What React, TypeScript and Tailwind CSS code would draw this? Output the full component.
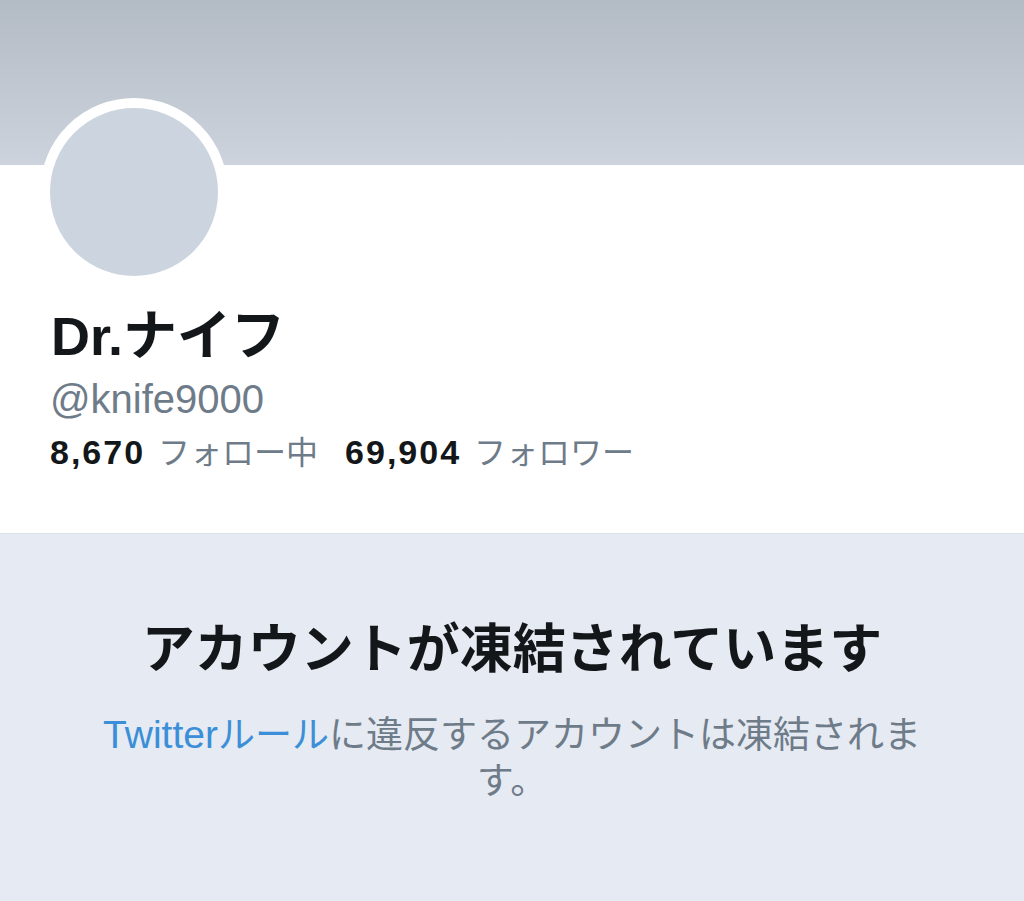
/**
 * Perfil de cuenta suspendida
 */

const sans = 'font-["Liberation_Sans","Noto_Sans_CJK_JP",sans-serif]';

export default function App() {
    return (
        <div className={`w-[1024px] h-[901px] overflow-hidden bg-[#e6eaf2] ${sans}`}>
            {/* banner */}
            <div className="h-[165px] bg-gradient-to-b from-[#b3bbc5] to-[#ccd3dc]" />

            {/* cabecera del perfil */}
            <div className="flex flex-col items-start bg-white pl-[50px] pb-[60px]">
                <div className="-mt-[67px] -ml-[10px] w-[188px] h-[188px] rounded-full border-[10px] border-white bg-[#ccd5df]" />
                <h1 className="mt-[22px] pl-[1px] text-[54px] leading-[57px] font-bold text-[#14171a]">Dr.ナイフ</h1>
                <div className="mt-[12px] text-[40px] leading-[44px] text-[#6e7b89]">@knife9000</div>
                <div className="mt-[11px] flex items-baseline text-[34px] leading-[40px]">
                    <span className="font-bold tracking-[2px] text-[#14171a]">8,670</span>
                    <span className="ml-[13px] text-[32px] text-[#6e7b89]">フォロー中</span>
                    <span className="ml-[27px] font-bold tracking-[2px] text-[#14171a]">69,904</span>
                    <span className="ml-[13px] text-[32px] text-[#6e7b89]">フォロワー</span>
                </div>
            </div>

            {/* aviso de suspensión */}
            <div className="border-t border-[#dde2e8] px-[97px] pt-[84px] text-center">
                <h2 className="text-[53px] leading-[64px] font-bold text-[#14171a]">アカウントが凍結されています</h2>
                <p className="mt-[30px] text-[37px] leading-[46px] text-[#6e7b89]">
                    <span className="text-[#3b8fd8]"><span className="text-[39px]">Twitter</span>ルール</span>に違反するアカウントは凍結されます。
                </p>
            </div>
        </div>
    );
}
